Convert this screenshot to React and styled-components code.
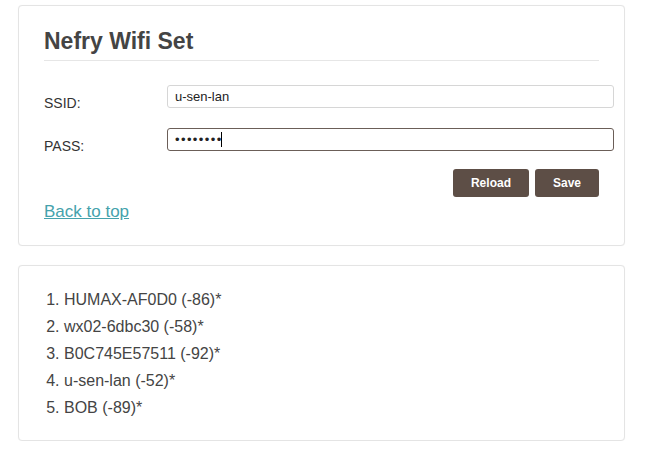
import React from "react";
import styled, { createGlobalStyle } from "styled-components";

const GlobalStyle = createGlobalStyle`
  html, body {
    margin: 0;
    padding: 0;
    background: #ffffff;
  }
  body {
    font-family: "Liberation Sans", Arial, Helvetica, sans-serif;
    color: #444444;
  }
  * { box-sizing: border-box; }
`;

const Page = styled.div`
  display: flex;
  flex-direction: column;
  gap: 19px;
  padding: 5px 20px 0 18px;
`;

const Card = styled.section`
  background: #ffffff;
  border: 1px solid #e4e4e4;
  border-radius: 4px;
  box-shadow: 0 0 1px rgba(0, 0, 0, 0.06);
  padding: ${(p) => p.$padding || "22px 25px 23px 25px"};
  display: flex;
  flex-direction: column;
`;

const Title = styled.h1`
  margin: 0;
  font-size: 23px;
  line-height: 26px;
  font-weight: 700;
  color: #444444;
  padding-bottom: 6px;
  border-bottom: 1px solid #e6e6e6;
`;

const Form = styled.form`
  display: flex;
  flex-direction: column;
  gap: 20px;
  margin-top: 24px;
  margin-right: -15px;
`;

const FieldRow = styled.div`
  display: grid;
  grid-template-columns: 123px 1fr;
  height: 23px;
`;

const Label = styled.label`
  align-self: end;
  font-size: 14px;
  line-height: 16px;
  margin-bottom: -3px;
  color: #333333;
`;

const InputWrap = styled.div`
  position: relative;
  height: 23px;
`;

const Input = styled.input`
  display: block;
  height: 23px;
  width: 100%;
  margin: 0;
  padding: 0 7px;
  font-family: "Liberation Sans", Arial, sans-serif;
  font-size: 13px;
  color: #222222;
  background: #ffffff;
  border: 1px solid ${(p) => (p.$active ? "#6b5e58" : "#d6d6d6")};
  border-radius: 3px;
  outline: none;
  caret-color: transparent;
  letter-spacing: ${(p) => (p.type === "password" ? "1.4px" : "0")};
`;

const Caret = styled.span`
  position: absolute;
  left: 54px;
  top: 4px;
  width: 1px;
  height: 15px;
  background: #000000;
  pointer-events: none;
`;

const Actions = styled.div`
  display: flex;
  justify-content: flex-end;
  gap: 6px;
  margin-top: 18px;
`;

const Button = styled.button`
  height: 28px;
  padding: 0 18px;
  border: none;
  border-radius: 3px;
  background: #5d4e46;
  color: #ffffff;
  font-family: "Liberation Sans", Arial, sans-serif;
  font-size: 12px;
  font-weight: 700;
  cursor: pointer;
`;

const BackLink = styled.a`
  align-self: flex-start;
  margin-top: 5px;
  font-size: 17px;
  line-height: 20px;
  color: #45a2ac;
  text-decoration: underline;
`;

const List = styled.ol`
  margin: 0;
  padding-left: 20px;
`;

const Item = styled.li`
  font-size: 16px;
  line-height: 27px;
  color: #444444;
`;

const networks = [
  "HUMAX-AF0D0 (-86)*",
  "wx02-6dbc30 (-58)*",
  "B0C745E57511 (-92)*",
  "u-sen-lan (-52)*",
  "BOB (-89)*",
];

export default function App() {
  return (
    <>
      <GlobalStyle />
      <Page>
        <Card>
          <Title>Nefry Wifi Set</Title>
          <Form onSubmit={(e) => e.preventDefault()}>
            <FieldRow>
              <Label htmlFor="ssid">SSID:</Label>
              <InputWrap>
                <Input id="ssid" type="text" defaultValue="u-sen-lan" />
              </InputWrap>
            </FieldRow>
            <FieldRow>
              <Label htmlFor="pass">PASS:</Label>
              <InputWrap>
                <Input id="pass" type="password" defaultValue="password" $active />
                <Caret />
              </InputWrap>
            </FieldRow>
          </Form>
          <Actions>
            <Button type="button">Reload</Button>
            <Button type="button">Save</Button>
          </Actions>
          <BackLink href="#top">Back to top</BackLink>
        </Card>
        <Card $padding="20px 25px 19px 25px">
          <List>
            {networks.map((n) => (
              <Item key={n}>{n}</Item>
            ))}
          </List>
        </Card>
      </Page>
    </>
  );
}
